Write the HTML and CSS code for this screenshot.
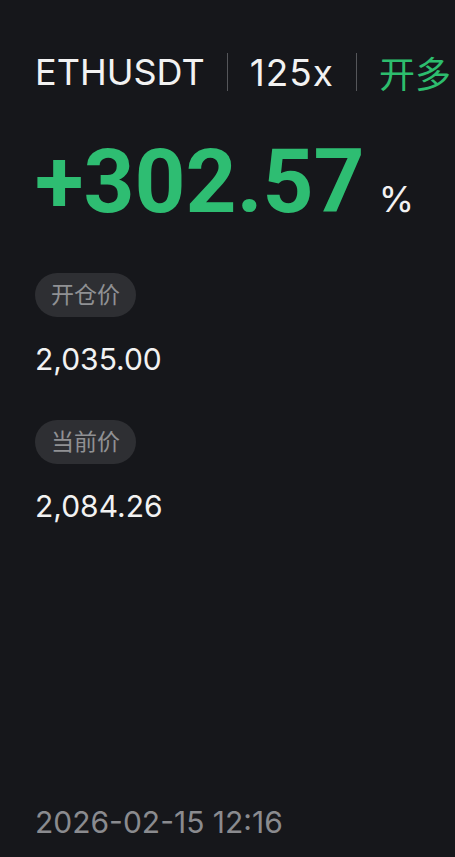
FILE: index.html
```html
<!DOCTYPE html>
<html lang="zh-CN">
<head>
    <meta charset="UTF-8">
    <meta name="viewport" content="width=device-width, initial-scale=1.0">
    <title>ETHUSDT</title>
    <link rel="stylesheet" href="styles.css">
</head>
<body>
    <div class="card">
        <div class="header">
            <span class="symbol">ETHUSDT</span>
            <span class="divider"></span>
            <span class="leverage">125x</span>
            <span class="divider"></span>
            <span class="side">开多</span>
        </div>

        <div class="pnl">
            <span class="pnl-value">+302.57</span>
            <span class="pnl-unit">%</span>
        </div>

        <div class="price-block">
            <span class="chip">开仓价</span>
            <div class="price">2,035.00</div>
        </div>

        <div class="price-block">
            <span class="chip">当前价</span>
            <div class="price">2,084.26</div>
        </div>

        <div class="time">2026-02-15 12:16</div>
    </div>
</body>
</html>
```

FILE: styles.css
```css
html, body {
    margin: 0;
    padding: 0;
    background-color: #16171b;
    overflow: hidden;
}
body {
    font-family: Inter, "Noto Sans CJK SC", sans-serif;
    color: #f2f2f2;
}
.card {
    height: 857px;
    padding: 0 0 0 35px;
    box-sizing: border-box;
    display: flex;
    flex-direction: column;
}
.header {
    display: flex;
    align-items: center;
    gap: 22px;
    margin-top: 50px;
    white-space: nowrap;
    height: 44px;
}
.symbol, .leverage {
    font-size: 36px;
    color: #f2f2f2;
}
.leverage {
    font-size: 37px;
    letter-spacing: 1px;
}
.side {
    font-size: 36px;
    color: #2dbd6e;
}
.divider {
    width: 1px;
    height: 38px;
    background-color: #55565a;
}
.pnl {
    display: flex;
    align-items: baseline;
    gap: 14px;
    margin-top: 43px;
    color: #2ebd72;
}
.pnl-value {
    font-family: Roboto, sans-serif;
    font-size: 89px;
    font-weight: 700;
    line-height: 1;
}
.pnl-unit {
    font-size: 36px;
    color: #f2f2f2;
}
.price-block {
    display: flex;
    flex-direction: column;
    align-items: flex-start;
    margin-top: 47px;
}
.price-block + .price-block {
    margin-top: 46px;
}
.chip {
    background-color: #2e2f33;
    color: #909194;
    font-size: 23px;
    border-radius: 22px;
    height: 44px;
    line-height: 44px;
    padding: 0 16px;
}
.price {
    font-size: 30px;
    margin-top: 27px;
    line-height: 1;
}
.time {
    margin-top: auto;
    margin-bottom: 17px;
    font-size: 30px;
    color: #8a8b8f;
}
```
